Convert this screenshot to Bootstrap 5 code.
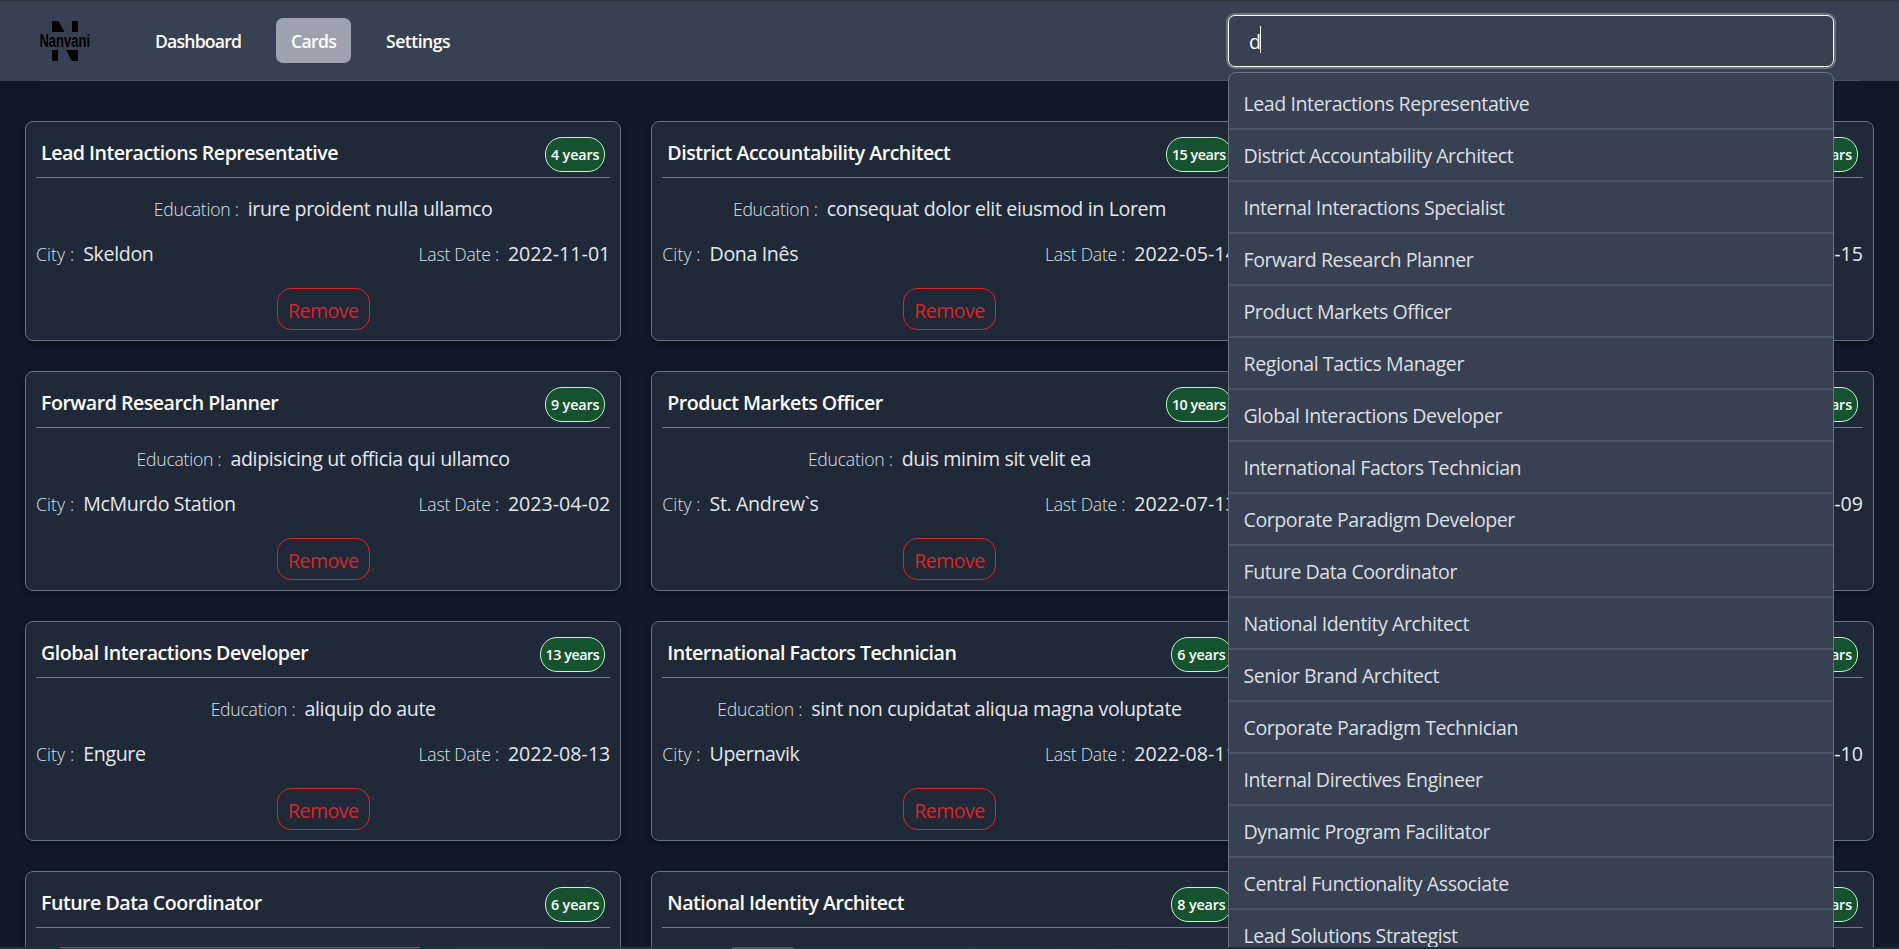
<!DOCTYPE html>
<html lang="en">
<head>
<meta charset="utf-8">
<meta name="viewport" content="width=device-width, initial-scale=1">
<title>Nanvani - Cards</title>
<link href="https://cdn.jsdelivr.net/npm/bootstrap@5.3.0/dist/css/bootstrap.min.css" rel="stylesheet">
<style>
  body { background: #111827; font-family: "Open Sans", sans-serif; font-size: 19.6px; line-height: 28px; height: 100vh; overflow: hidden; color: #e5e7eb; }
  .topbar { height: 81px; background: #374151; border-top: 1px solid #2f3641; padding: 0 40px; }
  .topbar-inner { height: 80px; border-bottom: 1px solid #4b5563; padding-right: 25px; }
  .menu { margin-left: 50px; gap: 20px; }
  .menu .nav-link { color: #fff; font-size: 17.6px; font-weight: 600; line-height: 45px; height: 45px; padding: 1px 15px 0; border-radius: 7px; letter-spacing: -.8px; }
  .menu .nav-link.active { background: #9ca3af; letter-spacing: -.7px; }
  .menu .tight { letter-spacing: -.52px; }
  .search { width: 606px; }
  .search-box { height: 52px; border: 1px solid #fff; border-radius: 7px; box-shadow: 0 0 0 2px #6b7280; padding: 2px 0 0 20px; color: #fff; }
  .caret { width: 1px; height: 27px; background: #fff; margin: -4px 0 0 -1px; }
  .suggest { top: 57px; left: 0; right: 0; z-index: 10; background: #374151; border: 1px solid #6b7280; border-radius: 8px; padding-top: 5px; letter-spacing: -.45px; color: #dcdfe4; }
  .suggest li { height: 52px; line-height: 52px; padding-left: 14.5px; border-bottom: 2px solid #475569; }
  .board { padding: 40px 25px; }
  .job { height: 220px; background: #1f2937; border: 1px solid #6b7280; border-radius: 8px; padding: 0 10px; box-shadow: 0 2px 5px rgba(0,0,0,.3); color: #e5e7eb; }
  .job-head { height: 56px; border-bottom: 1px solid #3b82f6; padding: 0 5px; }
  .job-title { font-size: 19.6px; font-weight: 600; line-height: 28px; letter-spacing: -.5px; color: #fff; margin: 0 0 10px; }
  .years { height: 35px; line-height: 34px; border: 1px solid #bbf7d0; background: #14532d; border-radius: 17px; padding: 0 5px; font-size: 14.3px; font-weight: 600; color: #fff; margin-bottom: 5px; letter-spacing: -.12px; }
  .years.two-digit { letter-spacing: -.45px; }
  .line { margin-top: 17px; }
  .tag { font-size: 17.6px; font-weight: 300; letter-spacing: -.25px; color: #dde0e5; margin-right: 9px; }
  .tag.city { letter-spacing: .1px; }
  .val { letter-spacing: -.36px; }
  .date { letter-spacing: .02px; }
  .remove { height: 42px; width: 93px; line-height: 42px; margin-top: 20px; border: 1px solid #dc2626; border-radius: 14px; background: none; color: #dc2626; padding: 1px 0 0; letter-spacing: -.55px; }
  .edge { height: 2px; background: linear-gradient(90deg, #20363f, #1f3340 50%, #1c2c42 65%); z-index: 20; }
  .edge .long { margin-left: 60px; width: 360px; background: #3f3035; border-top: 1px solid #66666a; }
  .edge .short { margin-left: 312px; width: 61px; background: #4b5762; }
</style>
</head>
<body>
<header class="topbar">
  <div class="topbar-inner d-flex align-items-center">
    <svg width="50" height="42" viewBox="0 0 50 42" overflow="visible" aria-label="Nanvani">
      <path d="M12 1h6.5l6 11H12zM32 1h6v11h-6zM12 30h6v11h-6zM26 30h12v11h-6z"/>
      <text x="-0.5" y="26.5" font-family="Liberation Sans Narrow, Liberation Sans" font-weight="700" font-size="17.5" textLength="50.5" lengthAdjust="spacingAndGlyphs">Nanvani</text>
    </svg>
    <nav class="nav menu">
      <a class="nav-link" href="#">Dashboard</a>
      <a class="nav-link active" href="#">Cards</a>
      <a class="nav-link tight" href="#">Settings</a>
    </nav>
    <div class="search ms-auto position-relative">
      <div class="search-box d-flex align-items-center"><span>d</span><span class="caret"></span></div>
      <ul class="suggest list-unstyled position-absolute mb-0" id="suggest"></ul>
    </div>
  </div>
</header>
<main class="board">
  <div class="row row-cols-3" id="cards" style="--bs-gutter-x:30px;--bs-gutter-y:30px"></div>
</main>
<div class="edge fixed-bottom d-flex"><div class="long"></div><div class="short"></div></div>
<script src="https://cdn.jsdelivr.net/npm/bootstrap@5.3.0/dist/js/bootstrap.bundle.min.js"></script>
<script>
  const titles = ['Lead Interactions Representative', 'District Accountability Architect', 'Internal Interactions Specialist', 'Forward Research Planner', 'Product Markets Officer', 'Regional Tactics Manager', 'Global Interactions Developer', 'International Factors Technician', 'Corporate Paradigm Developer', 'Future Data Coordinator', 'National Identity Architect', 'Senior Brand Architect', 'Corporate Paradigm Technician', 'Internal Directives Engineer', 'Dynamic Program Facilitator', 'Central Functionality Associate', 'Lead Solutions Strategist'];
  // years, education, city, last date
  const jobs = [
    [4, 'irure proident nulla ullamco', 'Skeldon', '2022-11-01'],
    [15, 'consequat dolor elit eiusmod in Lorem', 'Dona Inês', '2022-05-14'],
    [8, '', '', '2022-06-15'],
    [9, 'adipisicing ut officia qui ullamco', 'McMurdo Station', '2023-04-02'],
    [10, 'duis minim sit velit ea', 'St. Andrew`s', '2022-07-13'],
    [8, '', '', '2022-06-09'],
    [13, 'aliquip do aute', 'Engure', '2022-08-13'],
    [6, 'sint non cupidatat aliqua magna voluptate', 'Upernavik', '2022-08-11'],
    [8, '', '', '2022-06-10'],
    [6, '', '', ''], [8, '', '', ''], [8, '', '', '']
  ];
  document.getElementById('suggest').innerHTML = titles.map(t => `<li>${t}</li>`).join('');
  document.getElementById('cards').innerHTML = jobs.map(([y, e, c, d], i) => `
    <div class="col"><article class="job">
      <div class="job-head d-flex justify-content-between align-items-end"><h2 class="job-title">${titles[i]}</h2><span class="years ${y > 9 ? 'two-digit' : ''}">${y} years</span></div>
      ${d ? `<div class="line d-flex justify-content-center align-items-baseline"><span class="tag">Education :</span><span class="val">${e}</span></div>
      <div class="line d-flex justify-content-between">
        <div class="d-flex align-items-baseline"><span class="tag city">City :</span><span class="val">${c}</span></div>
        <div class="d-flex align-items-baseline"><span class="tag">Last Date :</span><span class="date">${d}</span></div>
      </div>
      <button class="remove d-block mx-auto">Remove</button>` : ''}
    </article></div>`).join('');
</script>
</body>
</html>
